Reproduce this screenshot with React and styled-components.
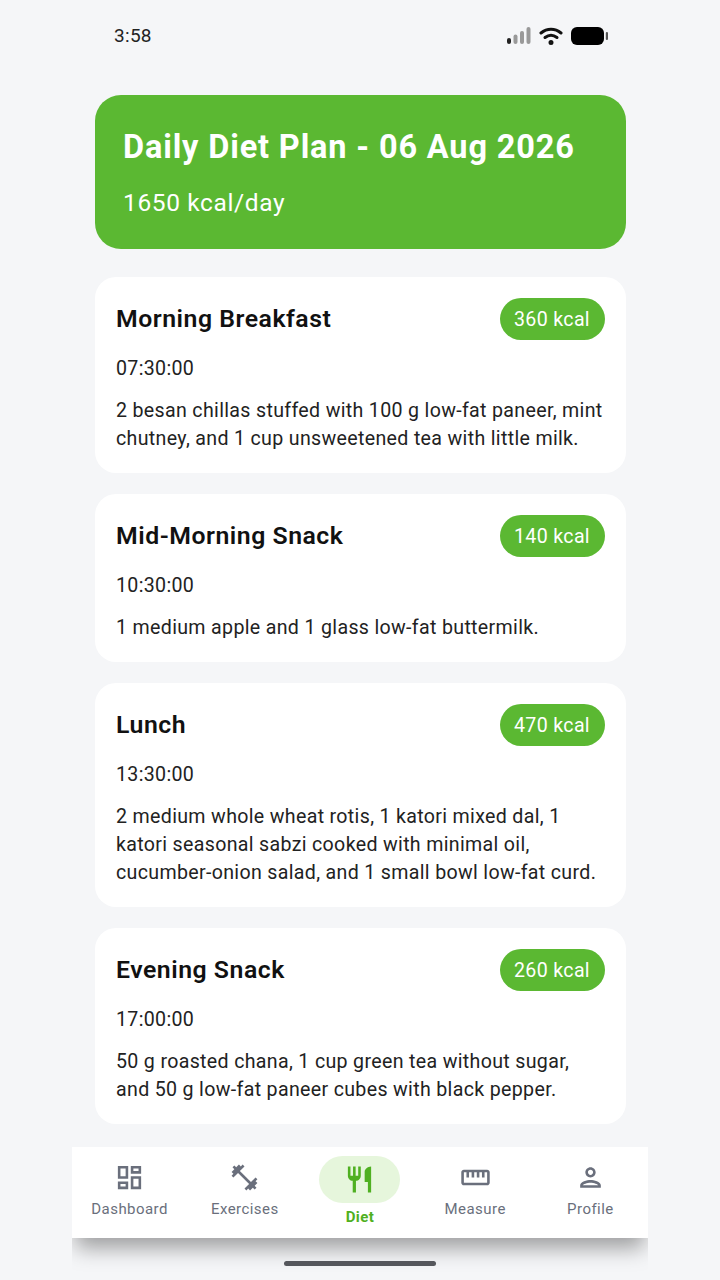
import React from 'react';
import styled, { createGlobalStyle } from 'styled-components';
import {
  MdOutlineDashboard,
  MdFitnessCenter,
  MdRestaurant,
  MdOutlineStraighten,
  MdOutlinePerson,
} from 'react-icons/md';

const GlobalStyle = createGlobalStyle`
  html, body {
    margin: 0;
    padding: 0;
    background: #f5f6f8;
    font-family: Roboto, "Noto Sans", sans-serif;
  }
  * { box-sizing: border-box; }
`;

const Screen = styled.div`
  width: 720px;
  height: 1280px;
  background: #f5f6f8;
  display: flex;
  flex-direction: column;
  overflow: hidden;
`;

const StatusBar = styled.div`
  height: 72px;
  flex-shrink: 0;
  padding: 0 112px 1px 114px;
  display: flex;
  align-items: center;
  justify-content: space-between;
  font-size: 19px;
  letter-spacing: 0.3px;
  color: #222;
`;

const StatusIcons = styled.div`
  display: flex;
  align-items: center;
  gap: 8px;
`;

const Content = styled.div`
  flex: 1;
  min-height: 0;
  padding: 23px 94.5px 0 94.5px;
  display: flex;
  flex-direction: column;
`;

const Hero = styled.div`
  height: 154px;
  flex-shrink: 0;
  border-radius: 26px;
  background: #5bb832;
  color: #fff;
  padding: 31px 28.5px 0;
  margin-bottom: 28px;
`;

const HeroTitle = styled.div`
  font-size: 32.5px;
  line-height: 42px;
  font-weight: 700;
  letter-spacing: 0.85px;
  white-space: nowrap;
`;

const HeroSub = styled.div`
  margin-top: 19px;
  font-size: 24.5px;
  line-height: 32px;
  letter-spacing: 0.62px;
`;

const Meals = styled.div`
  display: flex;
  flex-direction: column;
  gap: 21px;
`;

const Card = styled.div`
  background: #fff;
  border-radius: 21px;
  padding: 21px 21px 20px 21.5px;
`;

const CardHead = styled.div`
  display: flex;
  justify-content: space-between;
  align-items: center;
  height: 42px;
`;

const MealName = styled.div`
  font-size: 24.8px;
  font-weight: 600;
  line-height: 30px;
  padding-bottom: 1px;
  letter-spacing: 0.52px;
  color: #111;
`;

const Kcal = styled.div`
  height: 42px;
  width: 105px;
  border-radius: 21px;
  background: #5bb832;
  color: #fff;
  font-size: 19.6px;
  letter-spacing: 0.33px;
  display: flex;
  align-items: center;
  justify-content: center;
`;

const MealTime = styled.div`
  margin-top: 15px;
  font-size: 19.6px;
  line-height: 28px;
  letter-spacing: 0.33px;
  color: #222;
`;

const MealText = styled.div`
  margin-top: 14px;
  font-size: 19.6px;
  line-height: 28px;
  letter-spacing: 0.33px;
  color: #222;
`;

const BottomFrame = styled.div`
  margin: 0 72px;
  height: 133px;
  flex-shrink: 0;
  overflow: hidden;
  display: flex;
  flex-direction: column;
  align-items: center;
`;

const NavBar = styled.div`
  width: 100%;
  height: 91px;
  background: #fff;
  display: grid;
  grid-template-columns: repeat(5, 1fr);
  flex-shrink: 0;
  box-shadow: 0 14px 20px -4px rgba(0, 0, 0, 0.36);
`;

const NavItem = styled.div`
  display: flex;
  flex-direction: column;
  align-items: center;
  padding-top: ${p => (p.$active ? '9px' : '14px')};
  color: ${p => (p.$active ? '#4fb021' : '#6a6f7c')};
  font-size: 15px;
  letter-spacing: 0.45px;
  line-height: 18px;
  font-weight: ${p => (p.$active ? 700 : 450)};
`;

const NavIcon = styled.div`
  width: ${p => (p.$active ? '81px' : 'auto')};
  height: ${p => (p.$active ? '47px' : '32px')};
  border-radius: 24px;
  background: ${p => (p.$active ? '#e6f6dc' : 'transparent')};
  display: flex;
  align-items: center;
  justify-content: center;
  margin-bottom: ${p => (p.$active ? '5px' : '7px')};
`;

const HomeBar = styled.div`
  width: 152px;
  height: 5px;
  margin-top: 23px;
  border-radius: 3px;
  background: #55575c;
  position: relative;
`;

const meals = [
  {
    name: 'Morning Breakfast',
    kcal: '360 kcal',
    time: '07:30:00',
    text: '2 besan chillas stuffed with 100 g low-fat paneer, mint chutney, and 1 cup unsweetened tea with little milk.',
  },
  {
    name: 'Mid-Morning Snack',
    kcal: '140 kcal',
    time: '10:30:00',
    text: '1 medium apple and 1 glass low-fat buttermilk.',
  },
  {
    name: 'Lunch',
    kcal: '470 kcal',
    time: '13:30:00',
    text: '2 medium whole wheat rotis, 1 katori mixed dal, 1 katori seasonal sabzi cooked with minimal oil, cucumber-onion salad, and 1 small bowl low-fat curd.',
  },
  {
    name: 'Evening Snack',
    kcal: '260 kcal',
    time: '17:00:00',
    text: '50 g roasted chana, 1 cup green tea without sugar, and 50 g low-fat paneer cubes with black pepper.',
  },
];

const tabs = [
  { label: 'Dashboard', Icon: MdOutlineDashboard },
  { label: 'Exercises', Icon: MdFitnessCenter },
  { label: 'Diet', Icon: MdRestaurant, active: true },
  { label: 'Measure', Icon: MdOutlineStraighten },
  { label: 'Profile', Icon: MdOutlinePerson },
];

export default function App() {
  return (
    <Screen>
      <GlobalStyle />
      <StatusBar>
        <span>3:58</span>
        <StatusIcons>
          <svg width="24" height="17" viewBox="0 0 24 17">
            <rect x="0" y="11" width="4" height="6" rx="2" fill="#222" />
            <rect x="6.5" y="7.5" width="4" height="9.5" rx="2" fill="#999" />
            <rect x="13" y="4" width="4" height="13" rx="2" fill="#999" />
            <rect x="19.5" y="0" width="4" height="17" rx="2" fill="#999" />
          </svg>
          <svg width="24" height="18" viewBox="0 0 24 18" fill="none" stroke="#111" strokeWidth="3" strokeLinecap="round">
            <path d="M2 6c6-5 14-5 20 0" />
            <path d="M6 10.5c4-3 8-3 12 0" />
            <circle cx="12" cy="15.5" r="1" fill="#111" />
          </svg>
          <svg width="37" height="18" viewBox="0 0 37 18">
            <rect x="0" y="0" width="33" height="18" rx="6" fill="#000" />
            <rect x="34.8" y="5" width="2.2" height="8" rx="1.1" fill="#555" />
          </svg>
        </StatusIcons>
      </StatusBar>
      <Content>
        <Hero>
          <HeroTitle>Daily Diet Plan - 06 Aug 2026</HeroTitle>
          <HeroSub>1650 kcal/day</HeroSub>
        </Hero>
        <Meals>
          {meals.map(m => (
            <Card key={m.name}>
              <CardHead>
                <MealName>{m.name}</MealName>
                <Kcal>{m.kcal}</Kcal>
              </CardHead>
              <MealTime>{m.time}</MealTime>
              <MealText>{m.text}</MealText>
            </Card>
          ))}
        </Meals>
      </Content>
      <BottomFrame>
        <NavBar>
          {tabs.map(({ label, Icon, active }) => (
            <NavItem key={label} $active={active}>
              <NavIcon $active={active}>
                <Icon size={31} />
              </NavIcon>
              {label}
            </NavItem>
          ))}
        </NavBar>
        <HomeBar />
      </BottomFrame>
    </Screen>
  );
}
